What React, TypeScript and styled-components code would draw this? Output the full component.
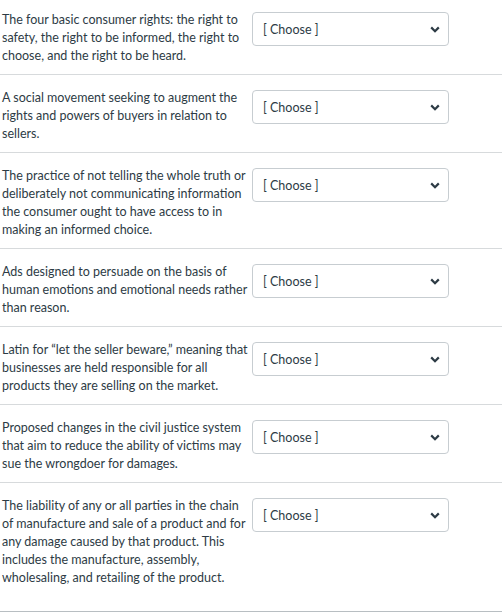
import React from "react";
import styled, { createGlobalStyle } from "styled-components";

const Global = createGlobalStyle`
  html, body { margin: 0; padding: 0; background: #fff; }
  body { font-family: Lato, "Open Sans", sans-serif; color: #2d3b45; }
`;

const List = styled.div`
  display: flex;
  flex-direction: column;
  width: 502px;
`;

const Row = styled.div<{ $first?: boolean; $last?: boolean }>`
  display: grid;
  grid-template-columns: 249px 197px;
  column-gap: 1px;
  align-items: start;
  padding: ${(p) => (p.$first ? "11px" : "14px")} 0 ${(p) => (p.$last ? "24px" : "9px")} 2px;
  border-bottom: 1px solid ${(p) => (p.$last ? "#b8bec2" : "#d7dadc")};
`;

const Prompt = styled.div`
  font-size: 12.5px;
  line-height: 18px;
`;

const Select = styled.div`
  margin-top: 1px;
  height: 34px;
  box-sizing: border-box;
  border: 1px solid #c7cdd1;
  border-radius: 4px;
  background: #fff;
  display: flex;
  align-items: center;
  justify-content: space-between;
  padding: 0 8px 0 10px;
  font-size: 12.5px;
  color: #2d3b45;
`;

const Chevron = () => (
  <svg width="10" height="7" viewBox="0 0 10 7" aria-hidden="true">
    <path d="M1.2 1.4 L5 5.2 L8.8 1.4" fill="none" stroke="#2d3b45" strokeWidth="2.2" />
  </svg>
);

const items = [
  "The four basic consumer rights: the right to safety, the right to be informed, the right to choose, and the right to be heard.",
  "A social movement seeking to augment the rights and powers of buyers in relation to sellers.",
  "The practice of not telling the whole truth or deliberately not communicating information the consumer ought to have access to in making an informed choice.",
  "Ads designed to persuade on the basis of human emotions and emotional needs rather than reason.",
  "Latin for \u201clet the seller beware,\u201d meaning that businesses are held responsible for all products they are selling on the market.",
  "Proposed changes in the civil justice system that aim to reduce the ability of victims may sue the wrongdoer for damages.",
  "The liability of any or all parties in the chain of manufacture and sale of a product and for any damage caused by that product. This includes the manufacture, assembly, wholesaling, and retailing of the product.",
];

export default function App() {
  return (
    <>
      <Global />
      <List>
        {items.map((t, i) => (
          <Row key={i} $first={i === 0} $last={i === items.length - 1}>
            <Prompt>{t}</Prompt>
            <Select>
              <span>[ Choose ]</span>
              <Chevron />
            </Select>
          </Row>
        ))}
      </List>
    </>
  );
}
